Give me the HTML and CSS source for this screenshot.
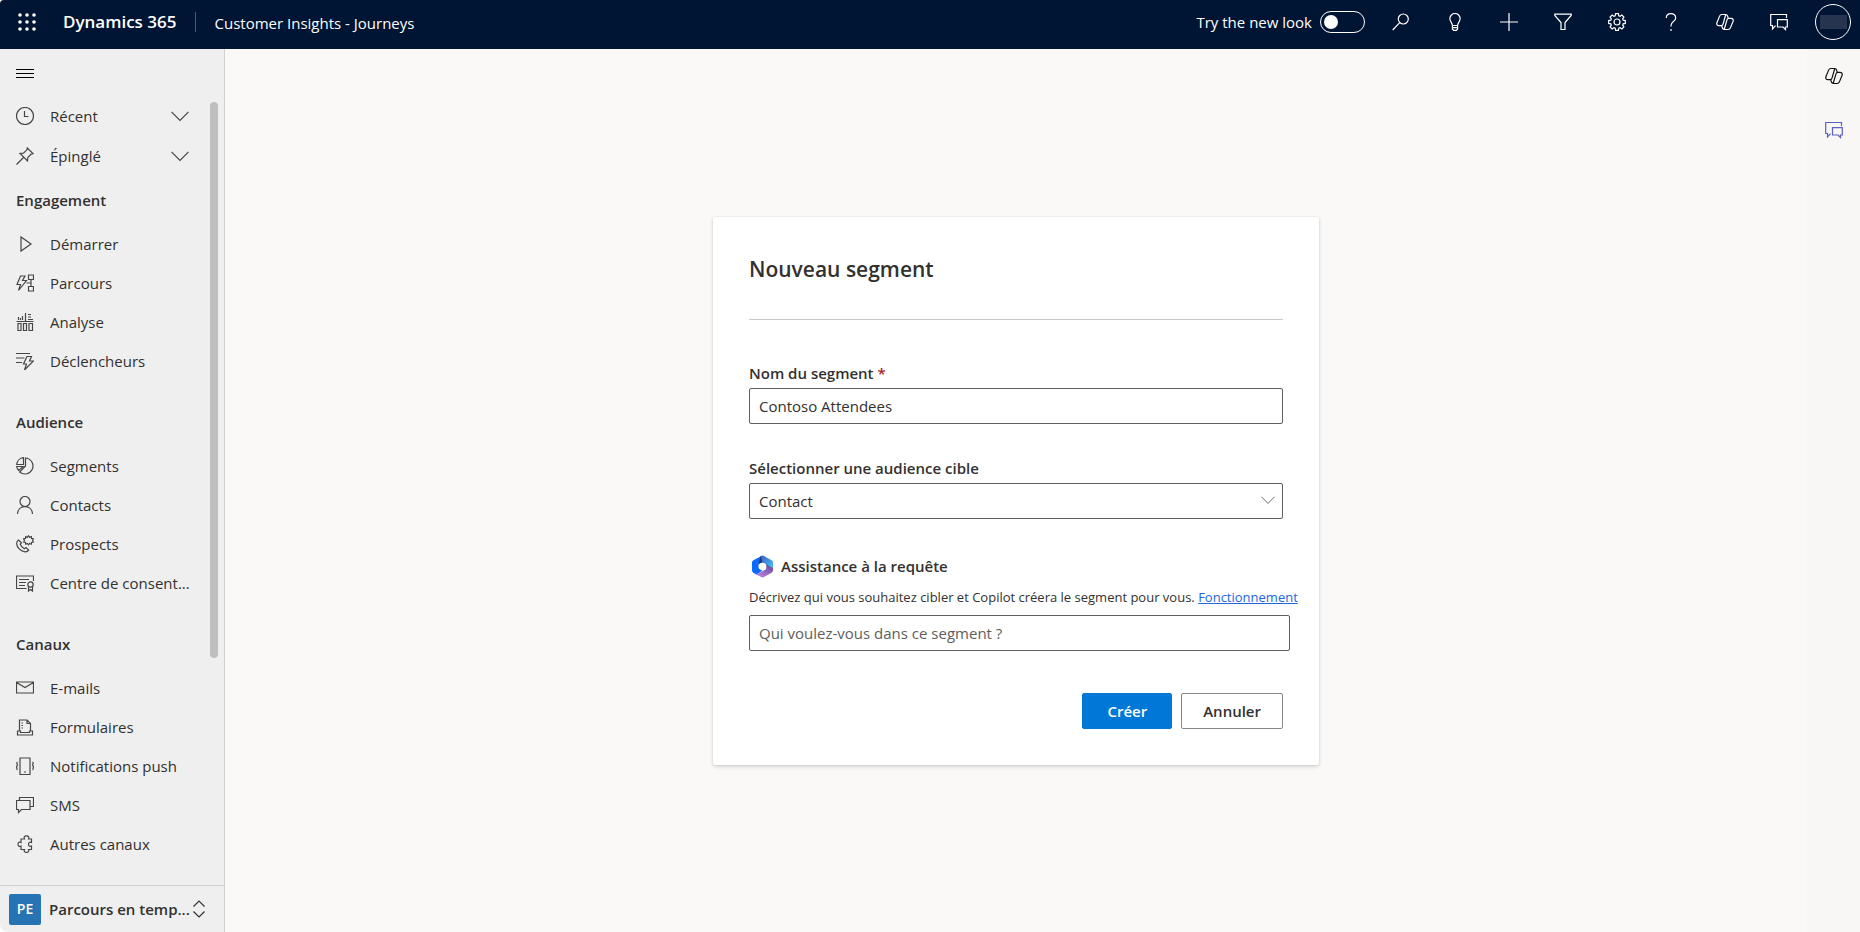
FILE: index.html
```html
<!DOCTYPE html>
<html lang="fr">
<head>
<meta charset="utf-8">
<title>Nouveau segment - Dynamics 365</title>
<link rel="stylesheet" href="styles.css">
</head>
<body>
<svg class="sprite" aria-hidden="true">
  <symbol id="copilot" viewBox="0 0 18 18"><path d="M9.800 1.500H6C4.700 1.500 3.900 2.200 3.500 3.400L.9 9.800c-.5 1.600.4 2.900 2 2.900H6M8.200 16.500H12c1.300 0 2.100-.7 2.500-1.900L17.100 8.200c.5-1.600-.4-2.900-2-2.900H12M9.800 1.500 7 11.200c-.3 1-.8 1.500-1.700 1.500M8.200 16.500 11 6.800c.3-1 .8-1.500 1.700-1.500M9.800 1.500c1.800 0 2 2.400 2.500 3.800M8.200 16.500c-1.800 0-2-2.400-2.500-3.800"/></symbol>
  <symbol id="chat" viewBox="0 0 18 18"><path d="M16.500 5V1.500H.7V12.500H2.500V16L5.500 12.700M7.500 6.700H17.300V14H15.500V16.500L13 14H7.500Z"/></symbol>
  <symbol id="chevron" viewBox="0 0 18 18"><path d="M.5 4.800 9 13.300 17.500 4.800"/></symbol>
</svg>

<header class="topbar">
  <button class="waffle" aria-label="Lanceur d'applications">
    <svg class="icon solid" viewBox="0 0 18 18"><circle cx="2" cy="2" r="1.800"/><circle cx="9" cy="2" r="1.800"/><circle cx="16" cy="2" r="1.800"/><circle cx="2" cy="9" r="1.800"/><circle cx="9" cy="9" r="1.800"/><circle cx="16" cy="9" r="1.800"/><circle cx="2" cy="16" r="1.800"/><circle cx="9" cy="16" r="1.800"/><circle cx="16" cy="16" r="1.800"/></svg>
  </button>
  <span class="brand">Dynamics 365</span>
  <span class="app-name">Customer Insights - Journeys</span>
  <div class="tools">
    <label class="new-look">Try the new look <input class="toggle" type="checkbox" role="switch"></label>
    <button class="tool" aria-label="Rechercher"><svg class="icon" viewBox="0 0 18 18"><circle cx="11.300" cy="6" r="5"/><path d="M7.700 9.700.7 17"/></svg></button>
    <button class="tool" aria-label="Conseils"><svg class="icon" viewBox="0 0 18 18"><path d="M6.400 12.500C6.300 9.800 3.900 8.800 3.900 5.600a5.100 5.100 0 0 1 10.200 0c0 3.200-2.400 4.200-2.500 6.900ZM6.400 12.500V16l1.200 1.400h2.800L11.600 16V12.500M6.400 14.700h5.200"/></svg></button>
    <button class="tool" aria-label="Nouveau"><svg class="icon" viewBox="0 0 18 18"><path d="M9 0V18M0 9H18"/></svg></button>
    <button class="tool" aria-label="Filtrer"><svg class="icon" viewBox="0 0 18 18"><path d="M.8 1.200H17.200V2.400L11 9.500V16.500H7V9.500L.8 2.400Z"/></svg></button>
    <button class="tool" aria-label="Paramètres"><svg class="icon" viewBox="0 0 18 18"><circle cx="9" cy="9" r="3"/><path d="M7.600.7h2.800l.4 2.100 1.300.5 1.800-1.200 2 2-1.200 1.800.5 1.300 2.100.4v2.800l-2.100.4-.5 1.300 1.200 1.800-2 2-1.800-1.200-1.300.5-.4 2.100H7.600l-.4-2.100-1.300-.5-1.800 1.200-2-2 1.200-1.800-.5-1.300-2.100-.4V7.600l2.100-.4.5-1.300-1.200-1.800 2-2 1.800 1.200 1.300-.5Z"/></svg></button>
    <button class="tool" aria-label="Aide"><svg class="icon" viewBox="0 0 18 18"><path d="M4.300 5C4.300 2.300 6.300.7 9 .7s4.700 1.600 4.700 4.200C13.700 8.500 9 8.700 9 12.500V13.500M9 16V18"/></svg></button>
    <button class="tool" aria-label="Copilot"><svg class="icon"><use href="#copilot"/></svg></button>
    <button class="tool" aria-label="Conversations"><svg class="icon"><use href="#chat"/></svg></button>
    <button class="tool" aria-label="Compte"><span class="avatar"><span class="avatar-name"></span></span></button>
  </div>
</header>

<div class="shell">
  <aside class="sidebar">
    <button class="menu-button" aria-label="Menu"><svg class="icon" viewBox="0 0 18 18"><path d="M0 5.500H18M0 9.500H18M0 13.500H18" shape-rendering="crispEdges"/></svg></button>
    <div class="nav-scroll">
      <nav class="nav">
        <button class="nav-item tall"><svg class="icon" viewBox="0 0 18 18"><circle cx="9" cy="9" r="8.500"/><path d="M8.500 4V9.500H12.500"/></svg><span class="nav-text">Récent</span><svg class="icon"><use href="#chevron"/></svg></button>
        <button class="nav-item tall"><svg class="icon" viewBox="0 0 18 18"><path d="M11.300 1 17 6.700 15.200 7.100 11.800 10.500 11.500 14 4 6.500 7.500 6.200 10.900 2.800ZM7.500 10.500.5 17.500"/></svg><span class="nav-text">Épinglé</span><svg class="icon"><use href="#chevron"/></svg></button>

        <section>
          <h2 class="nav-heading">Engagement</h2>
          <a class="nav-item" href="#"><svg class="icon" viewBox="0 0 18 18"><path d="M5 2V16L15 9Z"/></svg><span class="nav-text">Démarrer</span></a>
          <a class="nav-item" href="#"><svg class="icon" viewBox="0 0 18 18"><path d="M4.500 2H9L6.500 6.500H10.500L2.500 16.500 4.500 10.500H1ZM12.500 1H17.500V5.500H12.500ZM12.500 12.500H17.500V17H12.500ZM15 5.500V12.500M10.500 9H15"/></svg><span class="nav-text">Parcours</span></a>
          <a class="nav-item" href="#"><svg class="icon" viewBox="0 0 18 18"><path d="M.5 8.500H17.500M2.500 4V7M4.500 5V7M6.500 3V7M9.500 0V8M12 1.500H15M12 4H15M12 6.500H17M2 10.500H5V17.500H2ZM7.500 10.500H10.500V17.500H7.500ZM13 10.500H16.500V17.500H13Z"/></svg><span class="nav-text">Analyse</span></a>
          <a class="nav-item" href="#"><svg class="icon" viewBox="0 0 18 18"><path d="M0 1.500H14M0 6H8.500M0 10.500H6M11 4.500H15.500L13.500 9H17.500L8.500 18 10.500 12H7.500Z"/></svg><span class="nav-text">Déclencheurs</span></a>
        </section>

        <section class="nav-section">
          <h2 class="nav-heading">Audience</h2>
          <a class="nav-item" href="#"><svg class="icon" viewBox="0 0 18 18"><path d="M9.500 1a8 8 0 1 1-5.800 14L9.500 9ZM7.500.7V7.500H.7A7.500 7.500 0 0 1 7.500.7ZM.7 9.500H7L2.700 13.500A7 7 0 0 1 .7 9.500Z"/></svg><span class="nav-text">Segments</span></a>
          <a class="nav-item" href="#"><svg class="icon" viewBox="0 0 18 18"><circle cx="9" cy="5.500" r="5"/><path d="M1.500 18C1.700 13.500 4.800 10.700 9 10.700S16.300 13.500 16.500 18"/></svg><span class="nav-text">Contacts</span></a>
          <a class="nav-item" href="#"><svg class="icon" viewBox="0 0 18 18"><path d="M2.500 5C-.2 7 .2 10.500 3 13.700s7.500 4.300 9.800 1.500L10 12.500 8.300 13.700C6.500 12.700 5 11 4.200 9.200L5.500 7.700Z"/><path d="m12.500.8 1.100 1.400 1.700-.6.2 1.800 1.800.3-.7 1.700.7 1.600-1.800.4-.2 1.800-1.700-.7-1.100 1.400-1.100-1.400-1.700.7-.2-1.800-1.800-.4.7-1.600-.7-1.700 1.800-.3.200-1.800 1.700.6Z"/></svg><span class="nav-text">Prospects</span></a>
          <a class="nav-item" href="#"><svg class="icon" viewBox="0 0 18 18"><path d="M10.500 14.500H.5V2H17.500V7M3 5.500H13M3 8.500H10M3 11.500H9"/><circle cx="14.500" cy="10.500" r="2.700"/><path d="M12.500 12.500V17L14.500 15.500 16.500 17V12.500"/></svg><span class="nav-text">Centre de consent...</span></a>
        </section>

        <section class="nav-section">
          <h2 class="nav-heading">Canaux</h2>
          <a class="nav-item" href="#"><svg class="icon" viewBox="0 0 18 18"><path d="M.5 3H17.500V14H.5ZM.5 3.500 9 8.500 17.500 3.500"/></svg><span class="nav-text">E-mails</span></a>
          <a class="nav-item" href="#"><svg class="icon" viewBox="0 0 18 18"><path d="M3.500 13V2H11L14.500 5.500V13M11 2V5.500H14.500M1.500 13H4.500V14.500H13.500V13H16.500V17H1.500ZM5.500 5H7M5.500 7.500H7M5.500 10H7"/></svg><span class="nav-text">Formulaires</span></a>
          <a class="nav-item" href="#"><svg class="icon" viewBox="0 0 18 18"><path d="M4 1H14V17.500H4ZM8 15H10M1.500 5C-.5 6.500 2.500 7.500 1 9S2 11.500.7 13M16.500 5C18.500 6.500 15.500 7.500 17 9S16 11.500 17.300 13"/></svg><span class="nav-text">Notifications push</span></a>
          <a class="nav-item" href="#"><svg class="icon" viewBox="0 0 18 18"><path d="M.5 4.500H14V13.500H5.500L2.500 16.500V13.500H.5ZM3.500 4.500V1.500H17.500V10.500H14"/></svg><span class="nav-text">SMS</span></a>
          <a class="nav-item" href="#"><svg class="icon" viewBox="0 0 18 18"><path d="M5 4H8.500C7.500 2 8.500.8 10.500.8S13.500 2 12.500 4H15.500V7.500C13.500 6.700 12.500 7.500 12.500 9.200S13.500 11.800 15.500 11V14.500H12.500C13.500 16.200 12.300 17.300 10.500 17.300S7.500 16.200 8.500 14.500H5V11C3.300 12 2 11 2 9.200S3.300 6.500 5 7.500Z"/></svg><span class="nav-text">Autres canaux</span></a>
        </section>
      </nav>
      <div class="track"><div class="thumb"></div></div>
    </div>
    <button class="area-switch">
      <span class="area-badge">PE</span>
      <span class="area-name">Parcours en temp...</span>
      <svg class="icon" viewBox="0 0 18 18"><path d="M3.500 6.500 9 1 14.500 6.500M3.500 11.500 9 17 14.500 11.500"/></svg>
    </button>
  </aside>

  <main class="content">
    <form class="card">
      <h1 class="card-title">Nouveau segment</h1>
      <div class="field">
        <label class="label" for="name">Nom du segment <span class="required">*</span></label>
        <input class="control" id="name" type="text" value="Contoso Attendees">
      </div>
      <div class="field">
        <label class="label" for="audience">Sélectionner une audience cible</label>
        <div class="select-wrap">
          <select class="control" id="audience"><option>Contact</option></select>
          <svg class="select-arrow"><use href="#chevron"/></svg>
        </div>
      </div>
      <div class="field assist">
        <label class="assist-title" for="query">
          <svg class="assist-logo" viewBox="0 0 24 24">
            <defs>
              <linearGradient id="sky" x1="0" y1="0" x2="1" y2="1"><stop offset="0" stop-color="#3a5fc8"/><stop offset="1" stop-color="#45c8f5"/></linearGradient>
              <linearGradient id="violet" x1="0" y1="1" x2="1" y2="0"><stop offset="0" stop-color="#c58af0"/><stop offset="1" stop-color="#6b4694"/></linearGradient>
            </defs>
            <path fill="#0a6bff" d="M10.500 1.300 2.500 5.600Q1 6.500 1 8.200V16Q1 17.500 2.400 18.400L6 20.500 12 16 8 13V9L10.500 7.500Z"/>
            <path fill="url(#sky)" d="M10 1.300Q12 0 14 1.300L21.500 5.600Q23 6.500 23 8.200V14.500L16 10.500 10 8Z"/>
            <path fill="#27356f" d="M10 1.300 12 7.500 8 10 9.500 2ZM16 10 23 14.500 16 15Z"/>
            <path fill="url(#violet)" d="M23 13V16Q23 17.500 21.500 18.400L14 22.700Q12 24 10 22.700L4.500 19.600Q7 20 9 18.500L16 14.500V10.500Q17 12 19 12.600Z"/>
            <circle fill="#fff" cx="12" cy="12" r="4"/>
          </svg>
          Assistance à la requête
        </label>
        <p class="hint">Décrivez qui vous souhaitez cibler et Copilot créera le segment pour vous. <a class="hint-link" href="#">Fonctionnement</a></p>
        <input class="control" id="query" type="text" placeholder="Qui voulez-vous dans ce segment ?">
      </div>
      <div class="actions">
        <button class="btn primary" type="button">Créer</button>
        <button class="btn" type="button">Annuler</button>
      </div>
    </form>
  </main>

  <aside class="rail">
    <button class="rail-button" aria-label="Copilot"><svg class="icon"><use href="#copilot"/></svg></button>
    <button class="rail-button accent" aria-label="Conversations"><svg class="icon"><use href="#chat"/></svg></button>
  </aside>
</div>
</body>
</html>
```
FILE: styles.css
```css
* { box-sizing: border-box; }

body {
  margin: 0;
  height: 100vh;
  display: flex;
  flex-direction: column;
  overflow: hidden;
  background: #fff;
  color: #323130;
  font: 15px/20px "Segoe UI", "Open Sans", "Noto Sans", sans-serif;
}

button, input, select { font: inherit; color: inherit; }
button { background: none; border: 0; padding: 0; }

.sprite { position: absolute; width: 0; height: 0; }

.icon {
  width: 18px;
  height: 18px;
  flex: none;
  fill: none;
  stroke: currentColor;
  stroke-width: 1.2;
}
.icon.solid { fill: currentColor; stroke: none; }

/* Top bar */
.topbar {
  height: 49px;
  flex: none;
  display: flex;
  align-items: center;
  padding: 0 0 5px 18px;
  background: #001433;
  color: #fff;
  border-top-left-radius: 4px;
}
.waffle { display: flex; margin-right: 27px; }
.brand {
  font-size: 17px;
  font-weight: 600;
  padding-right: 19px;
  border-right: 1px solid #4b5a72;
  margin-right: 18px;
}
.app-name { padding-top: 2px; }
.tools { margin-left: auto; display: flex; align-items: center; }
.new-look { display: flex; align-items: center; gap: 8px; margin-right: 9px; }
.toggle {
  appearance: none;
  margin: 0;
  width: 45px;
  height: 22px;
  border: 1px solid #fff;
  border-radius: 11px;
  display: flex;
  align-items: center;
  padding-left: 3px;
}
.toggle::before {
  content: "";
  width: 14px;
  height: 14px;
  border-radius: 50%;
  background: #fff;
}
.tool {
  width: 54px;
  height: 44px;
  display: flex;
  align-items: center;
  justify-content: center;
}
.avatar {
  width: 36px;
  height: 36px;
  border: 1px solid #fff;
  border-radius: 50%;
  display: flex;
  align-items: center;
  justify-content: center;
}
.avatar-name { width: 27px; height: 14px; background: #26344f; }

/* Page shell */
.shell { flex: 1; min-height: 0; display: flex; }

/* Side navigation */
.sidebar {
  width: 225px;
  flex: none;
  display: flex;
  flex-direction: column;
  background: #efefef;
  border-right: 1px solid #d0d0d0;
  border-bottom-left-radius: 8px;
}
.menu-button {
  height: 47px;
  flex: none;
  display: flex;
  align-items: center;
  padding-left: 16px;
  color: #000;
}
.nav-scroll { flex: 1; min-height: 0; display: flex; overflow: hidden; }
.nav { flex: 1; min-width: 0; padding-left: 16px; }
.nav-section { margin-top: 18px; }
.nav-heading {
  margin: 0;
  font-size: 15px;
  font-weight: 600;
  line-height: 48px;
}
.nav-item {
  width: 100%;
  height: 39px;
  display: flex;
  align-items: center;
  gap: 16px;
  padding-right: 21px;
  color: inherit;
  text-align: left;
  text-decoration: none;
}
.nav-item.tall { height: 40px; }
.nav-item .icon { color: #484644; }
.nav-text { flex: 1; white-space: nowrap; }
.track { width: 14px; padding-top: 6px; }
.thumb { width: 8px; height: 71%; border-radius: 4px; background: #bfbfbf; }
.area-switch {
  height: 47px;
  flex: none;
  display: flex;
  align-items: center;
  gap: 8px;
  padding: 0 16px 0 9px;
  border-top: 1px solid #d0d0d0;
  text-align: left;
}
.area-badge {
  width: 32px;
  height: 31px;
  flex: none;
  border-radius: 2px;
  background: #2774b5;
  color: #fff;
  font-size: 14px;
  font-weight: 600;
  line-height: 29px;
  text-align: center;
}
.area-name { flex: 1; min-width: 0; font-weight: 600; white-space: nowrap; }

/* Main form */
.content {
  flex: 1;
  min-width: 0;
  display: flex;
  align-items: center;
  justify-content: center;
  padding-top: 1px;
  background: #faf9f8;
}
.card {
  width: 100%;
  max-width: 606px;
  padding: 36px;
  background: #fff;
  border-radius: 2px;
  box-shadow: 0 2px 4px rgba(0, 0, 0, .14), 0 0 2px rgba(0, 0, 0, .12);
}
.card-title {
  margin: 0 0 42px;
  padding-bottom: 34px;
  border-bottom: 1px solid #c8c8c8;
  font-size: 21px;
  font-weight: 600;
  line-height: 32px;
}
.field { display: flex; flex-direction: column; margin-bottom: 33px; }
.label { font-weight: 600; line-height: 22px; margin-bottom: 4px; }
.required { color: #a4262c; }
.control {
  appearance: none;
  width: 100%;
  height: 36px;
  padding: 0 9px;
  border: 1px solid #605e5c;
  border-radius: 2px;
  background: #fff;
}
.control::placeholder { color: #605e5c; opacity: 1; }
.select-wrap { position: relative; }
.select-wrap .control { display: block; }
.select-arrow {
  position: absolute;
  top: 10px;
  right: 8px;
  width: 14px;
  height: 14px;
  fill: none;
  stroke: #605e5c;
  stroke-width: 1.2;
  pointer-events: none;
}
.assist { margin: 0 -7px 42px 0; }
.assist-title {
  display: flex;
  align-items: center;
  gap: 7px;
  padding-left: 2px;
  font-weight: 600;
  line-height: 28px;
}
.assist-logo { width: 23px; height: 23px; flex: none; }
.hint { margin: 7px 0 8px; font-size: 13px; line-height: 20px; white-space: nowrap; }
.hint-link { color: #2266e3; }
.actions { display: flex; justify-content: flex-end; gap: 9px; }
.btn {
  height: 36px;
  padding: 0 21px;
  border: 1px solid #8a8886;
  border-radius: 2px;
  font-weight: 600;
}
.btn.primary { background: #0078d7; border-color: #0078d7; color: #fff; padding: 0 24px; }

/* Right rail */
.rail { width: 53px; flex: none; background: #f8f7f6; }
.rail-button {
  width: 100%;
  height: 54px;
  display: flex;
  align-items: center;
  justify-content: center;
  color: #111;
}
.rail-button.accent { color: #5b5fc7; }
```
